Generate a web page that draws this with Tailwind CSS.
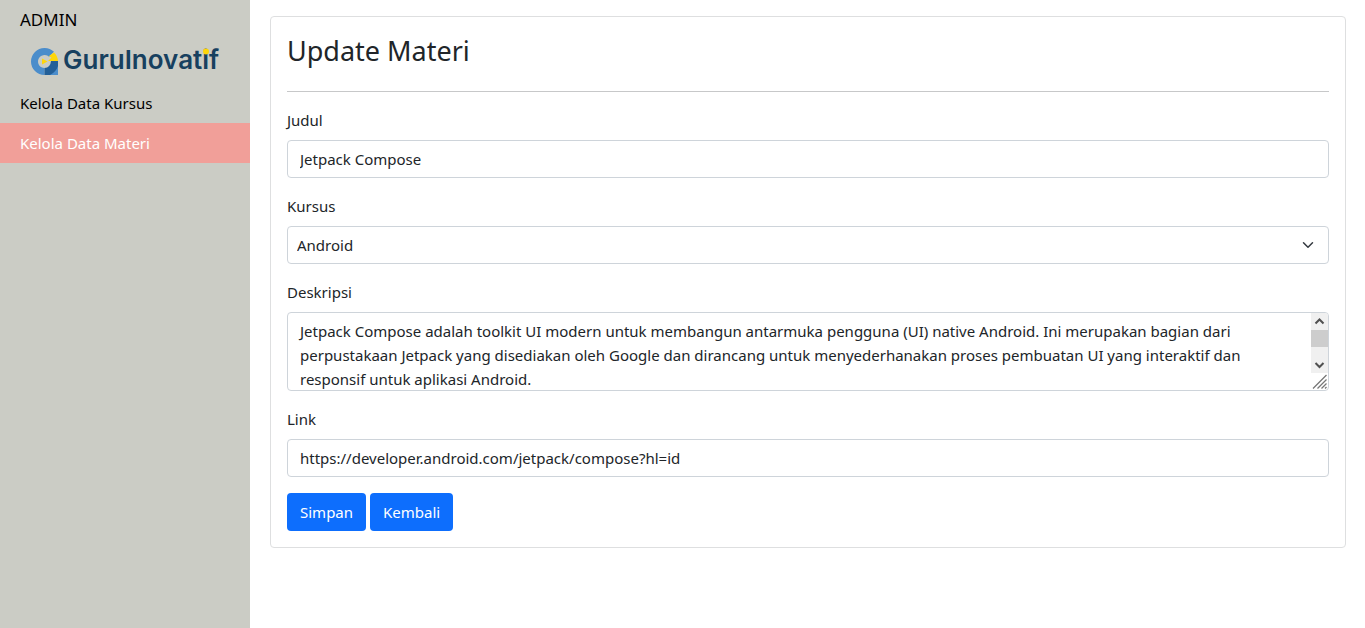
<!DOCTYPE html>
<html lang="id">
<head>
<meta charset="utf-8">
<meta name="viewport" content="width=device-width, initial-scale=1">
<title>Update Materi</title>
<script src="https://cdn.jsdelivr.net/npm/@tailwindcss/browser@4"></script>
</head>
<body class="flex min-h-screen bg-white font-['Noto_Sans',sans-serif] text-[15px] leading-6 text-[#212529]">
<aside class="w-[250px] shrink-0 bg-[#cbccc5] text-black">
  <div class="flex h-[43px] items-center px-5 pb-1 text-[17px]">ADMIN</div>
  <a href="#" class="block h-10" aria-label="GuruInovatif">
    <svg class="block h-10 w-[250px]" viewBox="0 43 250 40">
      <path d="M44.500 48A13.500 13.500 0 1 0 44.500 75V68A6.500 6.500 0 1 1 49 56.800L54 51.800A13.500 13.500 0 0 0 44.500 48Z" fill="#4b8dcb"/>
      <path d="M51 61H58V75H44.500V68Q50.500 67.500 51 61Z" fill="#235f98"/>
      <path d="M58 66V75H50Q56 72 58 66Z" fill="#4b8dcb"/>
      <path d="M54 52.500Q57.700 56 58 61H48L51.500 57.500Q49.500 56.500 49 56Z" fill="#ffd60a"/>
      <path d="M42 58.500L47.500 61.500L42 64.500Z" fill="#ffd60a"/>
      <text x="63" y="69" fill="#17405f" class="font-['Inter',sans-serif] text-[26px] font-semibold">GuruInovatif</text>
      <circle cx="206" cy="51.500" r="3" fill="#ffd60a"/>
    </svg>
  </a>
  <nav>
    <a href="#" class="block px-5 py-2">Kelola Data Kursus</a>
    <a href="#" aria-current="page" class="block bg-[#f19f99] px-5 py-2 text-white">Kelola Data Materi</a>
  </nav>
</aside>
<main class="min-w-0 flex-1 pt-4 pr-[19px] pl-5">
  <form class="rounded border border-[#dedfe0] p-4">
    <h1 class="mb-[22px] text-[27px] leading-9">Update Materi</h1>
    <hr class="mb-4 border-[#c7c8c9]">
    <label for="judul" class="mb-2 block">Judul</label>
    <input id="judul" type="text" value="Jetpack Compose" class="mb-4 block h-[38px] w-full rounded border border-[#ced4da] px-3">
    <label for="kursus" class="mb-2 block">Kursus</label>
    <div class="relative mb-4">
      <select id="kursus" class="block h-[38px] w-full appearance-none rounded border border-[#ced4da] bg-white px-[9px]"><option>Android</option></select>
      <svg class="pointer-events-none absolute top-[13px] right-[15px] size-3" viewBox="0 0 16 16" fill="none" stroke="#343a40" stroke-width="2" stroke-linecap="round" stroke-linejoin="round"><path d="m2 5 6 6 6-6"/></svg>
    </div>
    <label for="deskripsi" class="mb-2 block">Deskripsi</label>
    <div class="relative mb-4">
      <textarea id="deskripsi" class="block h-[79px] w-full resize-none rounded border border-[#ced4da] py-1.5 pr-[29px] pl-3 [scrollbar-width:none]">Jetpack Compose adalah toolkit UI modern untuk membangun antarmuka pengguna (UI) native Android. Ini merupakan bagian dari perpustakaan Jetpack yang disediakan oleh Google dan dirancang untuk menyederhanakan proses pembuatan UI yang interaktif dan responsif untuk aplikasi Android.</textarea>
      <svg class="pointer-events-none absolute top-px right-px h-[77px] w-[17px] rounded-r-[3px]" viewBox="0 0 17 77" fill="none">
        <path fill="#f0f0f0" d="M0 0h17v60H0z"/><path fill="#cdcdcd" d="M0 17h17v17H0z"/>
        <path stroke="#505050" stroke-width="2" d="m4.500 10.500 4-4 4 4M4.500 50l4 4 4-4"/>
        <path stroke="#777" stroke-width="1.300" d="M2 75.500 15.500 62M6.500 75.500l9-9M10.500 75.500l5-5M14 75.500l1.500-1.500"/>
      </svg>
    </div>
    <label for="link" class="mb-2 block">Link</label>
    <input id="link" type="text" value="https://developer.android.com/jetpack/compose?hl=id" class="mb-4 block h-[38px] w-full rounded border border-[#ced4da] px-3">
    <div class="flex gap-1">
      <button type="submit" class="h-[38px] rounded bg-[#0d6efd] px-[13px] text-white">Simpan</button>
      <button type="button" class="h-[38px] rounded bg-[#0d6efd] px-[13px] text-white">Kembali</button>
    </div>
  </form>
</main>
</body>
</html>
